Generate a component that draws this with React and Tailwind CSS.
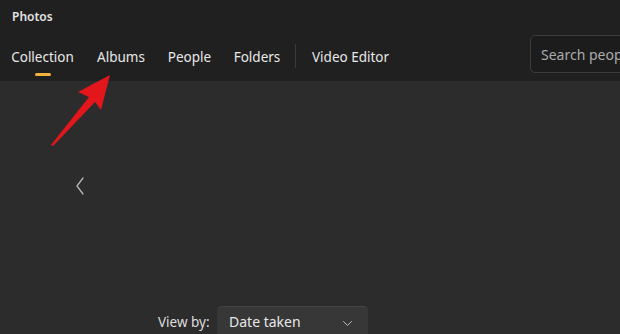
import React from 'react';

const navItems = [
  { label: 'Collection', w: 'w-[61px]', active: true },
  { label: 'Albums', w: 'w-[46px]' },
  { label: 'People', w: 'w-[41px]' },
  { label: 'Folders', w: 'w-[44px]' },
];

const NavItem = ({ label, w, active }) => (
  <div className={`flex flex-col items-center shrink-0 ${w}`}>
    <span className="whitespace-nowrap text-[13.5px] leading-[20px] text-[#e8e8e8]">{label}</span>
    {active ? (
      <span className="mt-[6px] h-[3px] w-[16px] rounded-full bg-[#f2b33d]" />
    ) : null}
  </div>
);

export default function App() {
  return (
    <div className="relative w-[620px] h-[334px] overflow-hidden bg-[#2c2c2c] font-['Segoe_UI','Noto_Sans',sans-serif]">
      {/* header */}
      <div className="flex flex-col h-[81px] bg-[#202020]">
        <div className="h-[34px] pl-3 pt-[8px] text-[12px] leading-[18px] font-semibold text-[#e4e4e4]">Photos</div>
        <div className="flex items-start h-[47px] pl-3">
          <div className="flex items-start gap-[25px] pt-[13px]">
            {navItems.map((n) => (
              <NavItem key={n.label} {...n} />
            ))}
          </div>
          <div className="ml-[16px] mt-[10px] h-[24px] w-px bg-[#3a3a3a]" />
          <div className="ml-[16px] pt-[13px] w-[76px] text-center whitespace-nowrap text-[13.5px] leading-[20px] text-[#e8e8e8]">
            Video Editor
          </div>
          <div className="flex-1" />
          <div className="mt-px mr-[-110px] flex h-[38px] w-[200px] shrink-0 items-center overflow-hidden whitespace-nowrap rounded-[5px] border border-[#3c3c3c] bg-[#1c1c1c] pl-[10px] text-[14px] text-[#ababab]">
            Search people
          </div>
        </div>
      </div>

      {/* content */}
      <div className="flex flex-col">
        <div className="ml-[76px] mt-[96px] h-[18px] w-[8px]">
          <svg width="8" height="18" viewBox="0 0 8 18" fill="none">
            <path d="M7 1 L1 9 L7 17" stroke="#b4b4b4" strokeWidth="1.3" strokeLinecap="round" strokeLinejoin="round" />
          </svg>
        </div>
        <div className="mt-[111px] flex items-start pl-[158px]">
          <span className="mt-[6px] w-[59px] whitespace-nowrap text-[13.5px] leading-[20px] text-[#dedede]">View by:</span>
          <div className="flex h-[36px] w-[151px] items-start justify-between rounded-[5px] border-t border-[#444444] bg-[#373737] pl-[12px] pr-[16px] pt-[5px]">
            <span className="text-[14px] leading-[20px] text-[#e8e8e8]">Date taken</span>
            <svg className="mt-[9px]" width="9" height="5" viewBox="0 0 9 5" fill="none">
              <path d="M0.5 0.5 L4.5 4.5 L8.5 0.5" stroke="#bdbdbd" strokeWidth="1" strokeLinecap="round" strokeLinejoin="round" />
            </svg>
          </div>
        </div>
      </div>

      {/* red annotation arrow */}
      <svg className="pointer-events-none absolute left-0 top-0" width="620" height="334" viewBox="0 0 620 334">
        <polygon
          points="110,75 78,92 89,97 51,145 53,146 95,102 101,110"
          fill="#e3161b"
        />
      </svg>
    </div>
  );
}
